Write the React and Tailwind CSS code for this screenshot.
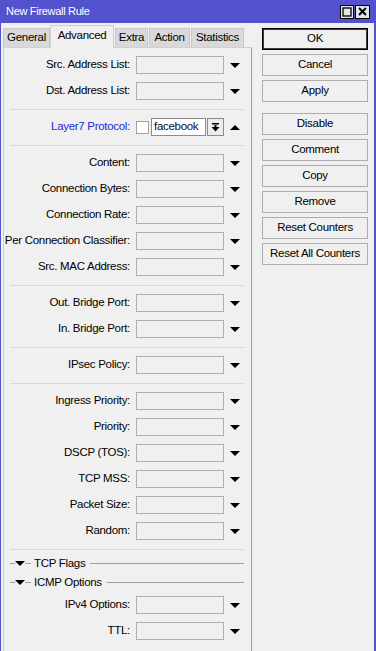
import React from "react";

const Tri = ({ up = false, className = "" }) => (
  <svg width="10" height="5" viewBox="0 0 10 5" className={className}>
    <polygon points={up ? "0,5 10,5 5,0" : "0,0 10,0 5,5"} fill="#000" />
  </svg>
);

const Field = ({ label }) => (
  <div className="flex items-center h-[26px]">
    <div className="w-[126px] text-right whitespace-nowrap">{label}</div>
    <div className="ml-[6px] w-[88px] h-[18px] border border-[#b0b0b0] bg-[#f0f0f0]" />
    <Tri className="ml-[6px]" />
  </div>
);

const Sep = () => (
  <div className="h-[10px] pt-[5px] pl-[6px] pr-[7px]">
    <div className="h-px bg-[#d8d8d8]" />
  </div>
);

const Group = ({ label }) => (
  <div className="flex items-center h-[19px] pl-[6px] pr-[7px]">
    <div className="w-[5px] h-px bg-[#a0a0a0]" />
    <Tri />
    <div className="w-[6px] h-px bg-[#a0a0a0]" />
    <span className="ml-[3px] whitespace-nowrap">{label}</span>
    <div className="ml-[5px] flex-1 h-px bg-[#a0a0a0]" />
  </div>
);

const Btn = ({ children, primary = false, className = "" }) => (
  <div
    className={`h-[22px] flex items-center justify-center bg-[#f0f0f0] border ${
      primary ? "border-black shadow-[inset_0_0_0_1px_#3c3c3c]" : "border-[#adadad]"
    } ${className}`}
  >
    {children}
  </div>
);

export default function App() {
  const tabs = [
    { name: "General", w: "w-[47px]", active: false, ml: "" },
    { name: "Advanced", w: "w-[64px]", active: true, ml: "" },
    { name: "Extra", w: "w-[33px]", active: false, ml: "ml-[1px]" },
    { name: "Action", w: "w-[41px]", active: false, ml: "ml-[1px]" },
    { name: "Statistics", w: "w-[53px]", active: false, ml: "ml-[1px]" },
  ];

  return (
    <div className="w-[376px] h-[651px] overflow-hidden bg-[#f0f0f0] border-l border-r-2 border-[#5252cf] font-['Liberation_Sans',Arial,sans-serif] text-[11.5px] tracking-[-0.3px] text-black">
      {/* Title bar */}
      <div className="h-[23px] bg-[#5252cf] flex items-center pl-[5px] pr-[4px]">
        <span className="text-white text-[11px]">New Firewall Rule</span>
        <div className="ml-auto flex gap-[1px]">
          <div className="w-[14px] h-[14px] bg-[#e6e6e6] border border-black flex items-center justify-center">
            <svg width="10" height="10" viewBox="0 0 10 10">
              <rect x="1" y="1" width="8" height="8" fill="none" stroke="#000" strokeWidth="1.3" />
            </svg>
          </div>
          <div className="w-[15px] h-[14px] bg-[#e6e6e6] border border-black flex items-center justify-center">
            <svg width="9" height="9" viewBox="0 0 9 9">
              <path d="M1 1 L8 8 M8 1 L1 8" stroke="#000" strokeWidth="2" />
            </svg>
          </div>
        </div>
      </div>

      <div className="flex">
        {/* Left: tabs + panel */}
        <div className="pl-[2px] w-[251px] h-[628px] flex flex-col">
          <div className="h-[24px] flex items-end">
            {tabs.map((t) =>
              t.active ? (
                <div
                  key={t.name}
                  className={`${t.w} ${t.ml} h-[23px] -mb-px relative z-10 bg-[#f0f0f0] border border-b-0 border-[#d0d0d0] flex items-center justify-center pb-[3px]`}
                >
                  {t.name}
                </div>
              ) : (
                <div
                  key={t.name}
                  className={`${t.w} ${t.ml} h-[19px] bg-[#d9d9d9] border border-b-0 border-[#c8c8c8] flex items-center justify-center`}
                >
                  {t.name}
                </div>
              )
            )}
          </div>

          <div className="flex-1 border-l border-t border-r border-[#d0d0d0] border-r-[#a0a0a0] pt-[4px]">
            <Field label="Src. Address List:" />
            <Field label="Dst. Address List:" />
            <Sep />
            <div className="flex items-center h-[26px]">
              <div className="w-[126px] text-right whitespace-nowrap text-[#2626d9]">Layer7 Protocol:</div>
              <div className="ml-[6px] w-[13px] h-[13px] bg-white border border-[#a0a0a0]" />
              <div className="ml-[2px] w-[55px] h-[18px] bg-white border border-[#8a8a8a] flex items-center pl-[2px] text-[#0a0a2a]">
                facebook
              </div>
              <div className="ml-[1px] w-[17px] h-[18px] bg-[#ececec] border border-[#8a8a8a] flex items-center justify-center">
                <svg width="9" height="9" viewBox="0 0 9 9">
                  <rect x="1" y="0" width="7" height="1.5" fill="#000" />
                  <rect x="3.5" y="2" width="2" height="3" fill="#000" />
                  <polygon points="0.5,4 8.5,4 4.5,8.5" fill="#000" />
                </svg>
              </div>
              <Tri up className="ml-[6px]" />
            </div>
            <Sep />
            <Field label="Content:" />
            <Field label="Connection Bytes:" />
            <Field label="Connection Rate:" />
            <Field label="Per Connection Classifier:" />
            <Field label="Src. MAC Address:" />
            <Sep />
            <Field label="Out. Bridge Port:" />
            <Field label="In. Bridge Port:" />
            <Sep />
            <Field label="IPsec Policy:" />
            <Sep />
            <Field label="Ingress Priority:" />
            <Field label="Priority:" />
            <Field label="DSCP (TOS):" />
            <Field label="TCP MSS:" />
            <Field label="Packet Size:" />
            <Field label="Random:" />
            <Sep />
            <Group label="TCP Flags" />
            <Group label="ICMP Options" />
            <Field label="IPv4 Options:" />
            <Field label="TTL:" />
          </div>
        </div>

        {/* Right: buttons */}
        <div className="ml-[10px] w-[106px] pt-[5px] flex flex-col">
          <Btn primary>OK</Btn>
          <Btn className="mt-[4px]">Cancel</Btn>
          <Btn className="mt-[4px]">Apply</Btn>
          <Btn className="mt-[11px]">Disable</Btn>
          <Btn className="mt-[4px]">Comment</Btn>
          <Btn className="mt-[4px]">Copy</Btn>
          <Btn className="mt-[4px]">Remove</Btn>
          <Btn className="mt-[4px]">Reset Counters</Btn>
          <Btn className="mt-[4px]">Reset All Counters</Btn>
        </div>
      </div>
    </div>
  );
}
